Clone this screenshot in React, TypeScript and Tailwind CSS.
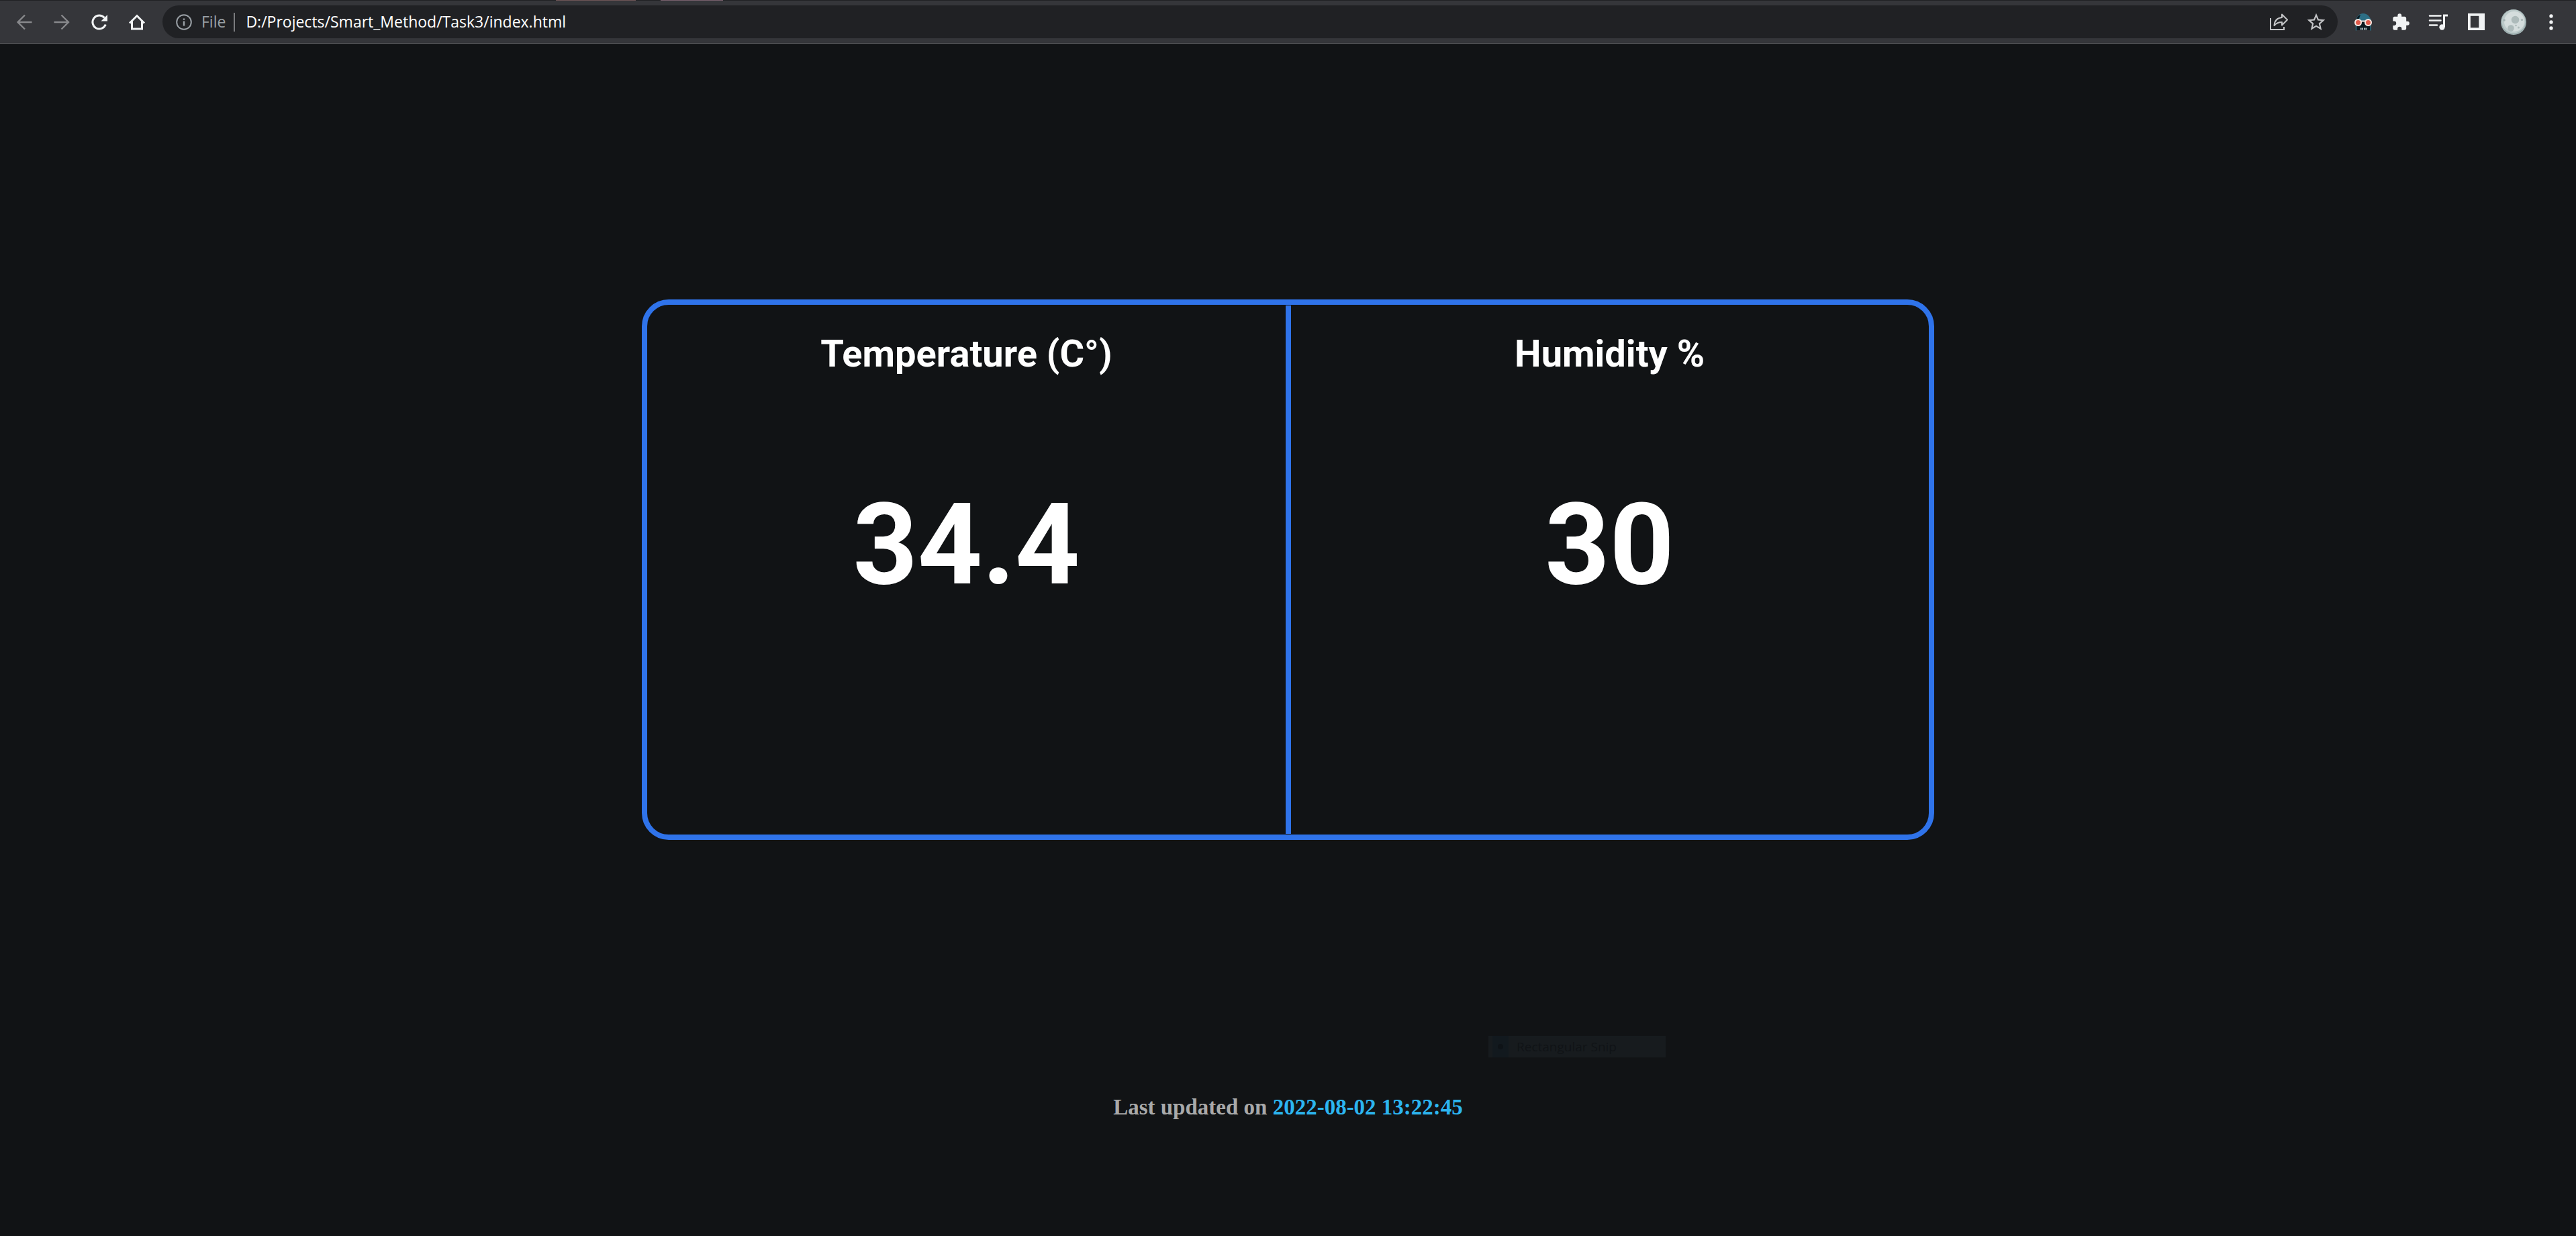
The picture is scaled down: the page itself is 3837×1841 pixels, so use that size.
import type { ReactNode } from "react";

function IconButton({ label, children }: { label: string; children: ReactNode }) {
  return (
    <button type="button" aria-label={label} className="flex h-12 w-14 shrink-0 items-center justify-center">
      {children}
    </button>
  );
}

const icon = "size-8";

function BackIcon() {
  return (
    <svg viewBox="0 0 32 32" className={icon} fill="none" stroke="#87888b" strokeWidth="2.4">
      <path d="M27.500 16H6M17 5.500 6.500 16 17 26.500" />
    </svg>
  );
}

function ForwardIcon() {
  return (
    <svg viewBox="0 0 32 32" className={icon} fill="none" stroke="#87888b" strokeWidth="2.4">
      <path d="M4.500 16H26M15.500 5.500 26 16 15.500 26.500" />
    </svg>
  );
}

function ReloadIcon() {
  return (
    <svg viewBox="0 0 32 32" className={icon} fill="none" stroke="#f1f3f4" strokeWidth="3">
      <path d="M25.300 19.500A10 10 0 1 1 23.500 9.500" />
      <path d="M28 5v9.500h-9.500z" fill="#f1f3f4" stroke="none" />
    </svg>
  );
}

function HomeIcon() {
  return (
    <svg viewBox="0 0 32 32" className={icon} fill="none" stroke="#f1f3f4" strokeWidth="3">
      <path d="M5 17.500 16 6.500 27 17.500" />
      <path d="M8.500 15v11h15V15" />
    </svg>
  );
}

function InfoIcon() {
  return (
    <svg viewBox="0 0 24 24" className="size-6 shrink-0" fill="none" stroke="#9aa0a6" strokeWidth="2">
      <circle cx="12" cy="12" r="10.800" />
      <path d="M12 10.500v7M12 6.500v2.200" strokeWidth="2.400" />
    </svg>
  );
}

function ShareIcon() {
  return (
    <svg viewBox="0 0 32 32" className={icon} fill="none" stroke="#c4c5c7" strokeWidth="2">
      <path d="M4 10v17h20v-4" />
      <path d="M9.500 21c.500-7 4.500-11.300 11.500-12V4.500l8 8-8 8V16c-5 0-8.500 1.500-11.500 5z" strokeLinejoin="round" />
    </svg>
  );
}

function StarIcon() {
  return (
    <svg viewBox="0 0 24 24" className={icon} fill="#c4c5c7">
      <path d="M22 9.240l-7.190-.620L12 2 9.190 8.630 2 9.240l5.460 4.730L5.820 21 12 17.270 18.180 21l-1.630-7.030L22 9.240zM12 15.400l-3.760 2.270 1-4.280-3.320-2.880 4.380-.380L12 6.100l1.710 4.040 4.380.380-3.320 2.880 1 4.280L12 15.400z" />
    </svg>
  );
}

function MaskIcon() {
  return (
    <svg viewBox="0 0 32 32" className={icon}>
      <path d="M5 15C5 8 10 3 16 3s11.500 5 11.500 12z" fill="#2d6f85" />
      <path d="M6 14C6 9 8 6 12 5L9 13z" fill="#0b1d25" />
      <path d="M5 15h22.500v13H5z" fill="#0c1a21" />
      <path d="M5.500 21v7.500M27 21v7.500" stroke="#2d6f85" strokeWidth="1.500" />
      <path d="M12 26h9.500" stroke="#d9e7ea" strokeWidth="3" strokeDasharray="1.500 1" />
      <path d="M12 14.500h8" stroke="#f7e9e3" strokeWidth="2" />
      <circle cx="8.500" cy="16.500" r="4.500" fill="#e05a4b" stroke="#f7e9e3" strokeWidth="2" />
      <circle cx="23.500" cy="16.500" r="4.500" fill="#e05a4b" stroke="#f7e9e3" strokeWidth="2" />
    </svg>
  );
}

function PuzzleIcon() {
  return (
    <svg viewBox="0 0 24 24" className="size-7" fill="#f1f3f4">
      <path d="M20.500 11H19V7c0-1.100-.900-2-2-2h-4V3.500a2.500 2.500 0 0 0-5 0V5H4c-1.100 0-1.990.900-1.990 2v3.800H3.500a2.700 2.700 0 0 1 0 5.400H2V20c0 1.100.900 2 2 2h3.800v-1.500a2.700 2.700 0 0 1 5.400 0V22H17c1.100 0 2-.900 2-2v-4h1.500a2.500 2.500 0 0 0 0-5z" />
    </svg>
  );
}

function MediaIcon() {
  return (
    <svg viewBox="0 0 32 32" className={icon} fill="none" stroke="#f1f3f4" strokeWidth="2.500">
      <path d="M3 6.500h16.500M3 13.500h16.500M3 20.500h11" strokeLinecap="round" />
      <path d="M24.500 23V6H30" strokeWidth="3" />
      <circle cx="21.500" cy="23.500" r="4.200" fill="#f1f3f4" stroke="none" />
    </svg>
  );
}

function SidePanelIcon() {
  return (
    <svg viewBox="0 0 26 26" className="size-[25px]">
      <path fillRule="evenodd" d="M0 0h26v26H0zM4 4v18h13V4z" fill="#f1f3f4" />
    </svg>
  );
}

function MoonAvatar() {
  return (
    <svg viewBox="0 0 38 38" className="size-[38px]">
      <circle cx="19" cy="19" r="19" fill="#9fb0b1" />
      <circle cx="19" cy="18" r="17.500" fill="#bccaca" />
      <circle cx="20" cy="18" r="15" fill="#d5dddd" />
      <circle cx="21.500" cy="15.500" r="5.800" fill="#adbaba" />
      <circle cx="15" cy="28" r="4.800" fill="#adbaba" />
      <circle cx="5" cy="16" r="1.800" fill="#a3b2b3" />
      <circle cx="31.500" cy="15.500" r="1.800" fill="#adbaba" />
      <circle cx="26.500" cy="27" r="1.500" fill="#adbaba" />
      <circle cx="22.500" cy="24" r="1.300" fill="#adbaba" />
    </svg>
  );
}

function MenuIcon() {
  return (
    <svg viewBox="0 0 32 32" className={icon} fill="#f1f3f4">
      <circle cx="16" cy="7" r="2.700" />
      <circle cx="16" cy="16" r="2.700" />
      <circle cx="16" cy="25" r="2.700" />
    </svg>
  );
}

function BrowserBar() {
  return (
    <header className="border-b border-[#5f6063] bg-[#35363a] font-['Open_Sans',sans-serif]">
      <div className="flex h-px bg-[#202124]">
        <span className="ml-[828px] w-[119px] bg-[#6d5556]" />
        <span className="ml-[37px] w-[93px] bg-[#77606c]" />
      </div>
      <div className="flex items-center py-[7px] pr-[9px] pl-2">
        <nav aria-label="Navigation" className="flex">
          <IconButton label="Back"><BackIcon /></IconButton>
          <IconButton label="Forward"><ForwardIcon /></IconButton>
          <IconButton label="Reload"><ReloadIcon /></IconButton>
          <IconButton label="Home"><HomeIcon /></IconButton>
        </nav>
        <div className="ml-[10px] flex h-[49px] flex-1 items-center rounded-full bg-[#202124] pr-1 pl-5 text-[23px]">
          <InfoIcon />
          <span className="ml-[14px] text-[#9aa0a6]">File</span>
          <span className="mr-4 ml-3 h-7 w-0.5 bg-[#7b7c7f]" />
          <input
            aria-label="Address"
            defaultValue="D:/Projects/Smart_Method/Task3/index.html"
            className="min-w-0 flex-1 bg-transparent text-white outline-none"
          />
          <IconButton label="Share"><ShareIcon /></IconButton>
          <IconButton label="Bookmark"><StarIcon /></IconButton>
        </div>
        <div className="ml-[10px] flex">
          <IconButton label="Mask extension"><MaskIcon /></IconButton>
          <IconButton label="Extensions"><PuzzleIcon /></IconButton>
          <IconButton label="Media"><MediaIcon /></IconButton>
          <IconButton label="Side panel"><SidePanelIcon /></IconButton>
          <IconButton label="Profile"><MoonAvatar /></IconButton>
          <IconButton label="Menu"><MenuIcon /></IconButton>
        </div>
      </div>
    </header>
  );
}

function Reading({ label, value }: { label: string; value: string }) {
  return (
    <section className="flex-1 pt-10 pb-[333px] text-center font-['Roboto',sans-serif] font-bold text-white">
      <h2 className="text-[56px] leading-[66px]">{label}</h2>
      <p className="mt-[154px] text-[168px] leading-[196px]">{value}</p>
    </section>
  );
}

export default function App() {
  return (
    <div className="flex min-h-screen flex-col bg-[#111315]">
      <BrowserBar />
      <main className="relative flex flex-1 flex-col items-center pt-[381px]">
        <div className="flex w-[calc(50%+6px)] rounded-[40px] border-8 border-[#2f73ea]">
          <Reading label="Temperature (C°)" value="34.4" />
          <div className="my-px w-2 bg-[#2f73ea]" />
          <Reading label="Humidity %" value="30" />
        </div>
        <p className="mt-[380px] font-['Liberation_Serif',serif] text-[33px] leading-[37px] font-bold text-[#a9a9a9]">
          Last updated on <time className="text-[#2cb5f0]">2022-08-02 13:22:45</time>
        </p>
        <div className="absolute top-[1478px] left-[2217px] flex h-8 w-[264px] items-center bg-[#171b1e] font-['Open_Sans',sans-serif] text-[19px] text-[#101316]">
          <span className="mr-3 ml-1.5 flex h-8 w-6 items-center justify-center bg-[#12191e]">
            <span className="size-2 rounded-full bg-[#0e1317]" />
          </span>
          Rectangular Snip
        </div>
      </main>
    </div>
  );
}
